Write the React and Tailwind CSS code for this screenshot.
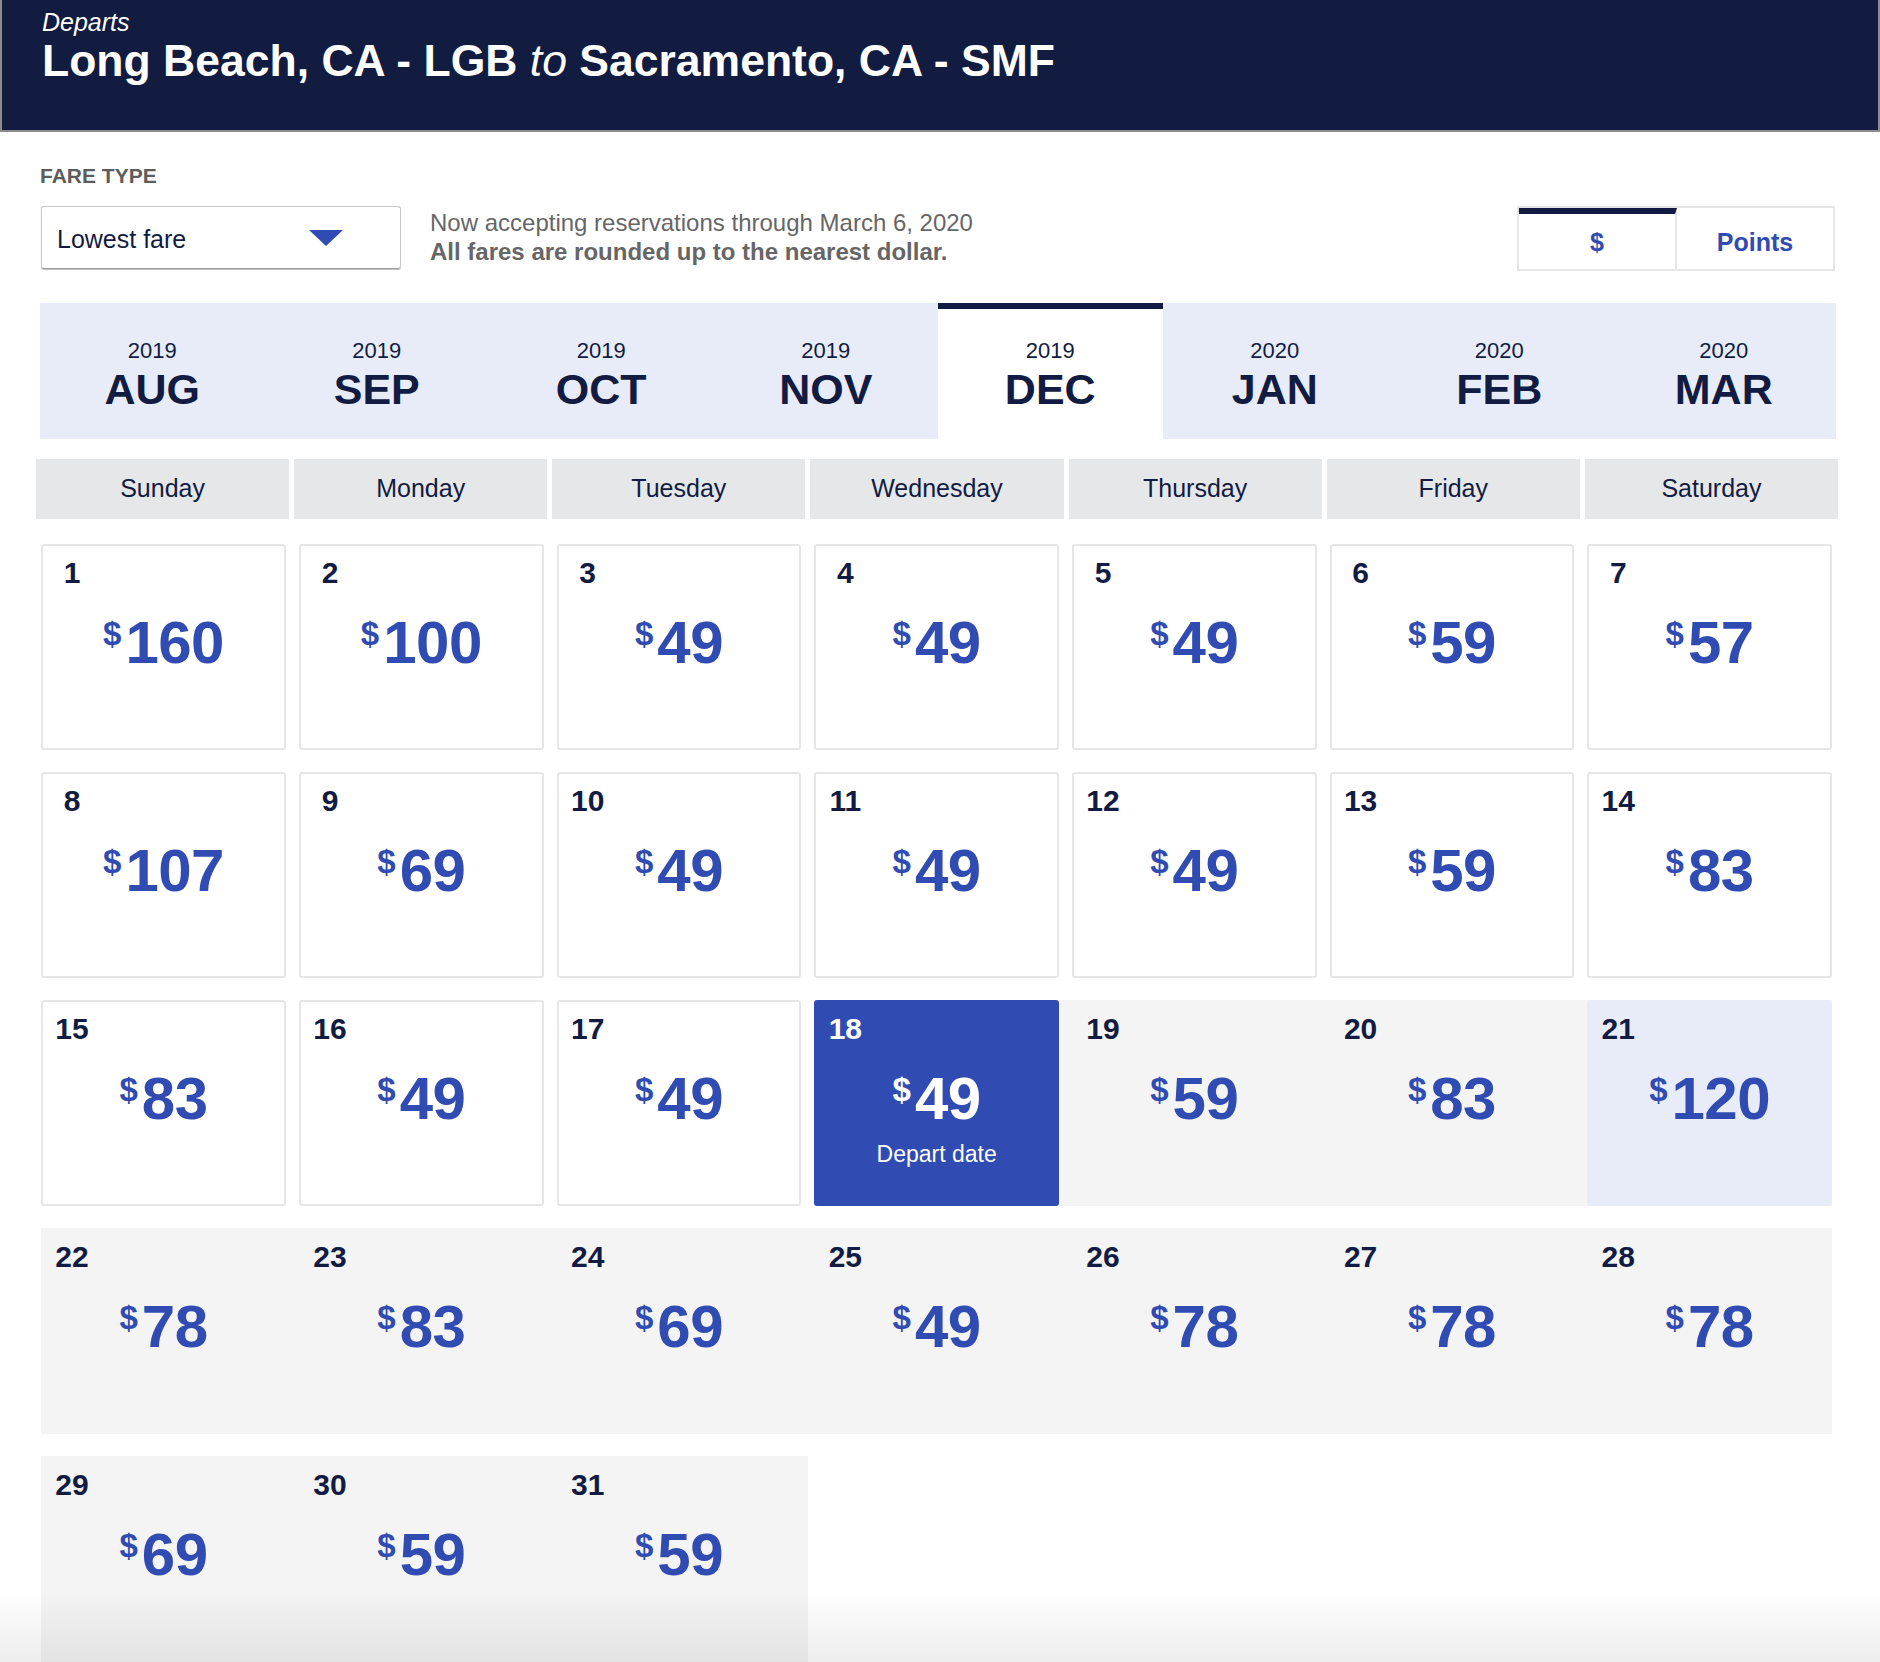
import React from 'react';

const MONTHS = [
  { y: '2019', m: 'AUG' },
  { y: '2019', m: 'SEP' },
  { y: '2019', m: 'OCT' },
  { y: '2019', m: 'NOV' },
  { y: '2019', m: 'DEC', active: true },
  { y: '2020', m: 'JAN' },
  { y: '2020', m: 'FEB' },
  { y: '2020', m: 'MAR' },
];

const WEEKDAYS = ['Sunday', 'Monday', 'Tuesday', 'Wednesday', 'Thursday', 'Friday', 'Saturday'];

// December 2019 fares, day 1 first
const PRICES = [
  160, 100, 49, 49, 49, 59, 57,
  107, 69, 49, 49, 49, 59, 83,
  83, 49, 49, 49, 59, 83, 120,
  78, 83, 69, 49, 78, 78, 78,
  69, 59, 59,
];

const DEPART = 18;
const RETURN = 21;

function Price({ value, light }) {
  return (
    <div className={`flex justify-center items-start mt-[25px] ${light ? 'text-white' : 'text-[#304cb2]'}`}>
      <span className="text-[33px] font-bold leading-none mt-[4px] mr-[4px]">$</span>
      <span className="text-[60px] font-bold leading-none tracking-[-0.5px]">{value}</span>
    </div>
  );
}

function DayCell({ day, price, col }) {
  const selected = day === DEPART;
  const inRange = day > DEPART;
  const isReturn = day === RETURN;

  let card;
  if (selected) card = 'border-[#304cb2] bg-[#304cb2]';
  else if (isReturn) card = 'border-[#e8ecf8] bg-[#e8ecf8]';
  else if (inRange) card = 'border-transparent';
  else card = 'border-[#e6e6e6] bg-white';

  return (
    <div className={`${col > 0 ? 'pl-[13px]' : ''} ${inRange ? 'bg-[#f4f4f4]' : ''} ${day === 31 ? 'mr-[-7px] pr-[7px]' : ''}`}>
      <div className={`h-[206px] border-2 rounded-[3px] pt-[12px] ${card}`}>
        <div className={`ml-[9px] w-[40px] text-center text-[30px] font-bold leading-none ${selected ? 'text-white' : 'text-[#121c42]'}`}>
          {day}
        </div>
        <Price value={price} light={selected} />
        {selected && (
          <div className="mt-[14px] text-center text-[23px] leading-none text-white">Depart date</div>
        )}
      </div>
    </div>
  );
}

export default function App() {
  const weeks = [];
  for (let i = 0; i < PRICES.length; i += 7) weeks.push(PRICES.slice(i, i + 7).map((p, j) => ({ day: i + j + 1, price: p })));

  return (
    <div className="relative w-[1880px] min-h-[1662px] bg-white font-['Liberation_Sans',Arial,sans-serif] overflow-hidden">
      {/* Header */}
      <div className="h-[132px] bg-[#121b40] border-x-2 border-b-2 border-[#8c8c8c] pl-[40px] pt-[10px] text-white">
        <div className="text-[25px] italic leading-none">Departs</div>
        <h1 className="mt-[4px] text-[44.5px] font-bold leading-none">
          Long Beach, CA - LGB <span className="italic font-normal">to</span> Sacramento, CA - SMF
        </h1>
      </div>

      <div className="ml-[40px] w-[1796px]">
        {/* Fare type row */}
        <div className="mt-[33px] text-[21px] font-bold leading-none text-[#5c5c5c]">FARE TYPE</div>
        <div className="mt-[20px] flex items-start">
          <div className="w-[360px] h-[63px] ml-[1px] border border-[#c8c8c8] border-b-[#9a9a9a] rounded-[3px] shadow-[0_1px_1px_rgba(0,0,0,0.25)] flex items-center pl-[15px] pr-[57px] pt-[4px] justify-between">
            <span className="text-[25px] text-[#121c42]">Lowest fare</span>
            <svg width="34" height="16" viewBox="0 0 34 16" className="-mt-[4px]">
              <polygon points="0,0 34,0 17,16" fill="#304cb2" />
            </svg>
          </div>
          <div className="ml-[29px] mt-[2px] text-[24px] leading-[29px] text-[#666]">
            <div>Now accepting reservations through March 6, 2020</div>
            <div className="font-bold">All fares are rounded up to the nearest dollar.</div>
          </div>
          <div className="ml-auto mr-[1px] w-[318px] h-[65px] border-2 border-[#e6e6e6] flex text-[25px] font-bold text-[#304cb2]">
            <div className="flex-1 border-t-[6px] border-t-[#121c42] border-r-2 border-r-[#e6e6e6] flex items-center justify-center pt-[2px]">$</div>
            <div className="flex-1 border-t-[6px] border-t-transparent flex items-center justify-center pt-[2px]">Points</div>
          </div>
        </div>

        {/* Months */}
        <div className="mt-[32px] h-[136px] bg-[#e8ecf8] grid grid-cols-8">
          {MONTHS.map(mo => (
            <div
              key={mo.m}
              className={`flex flex-col items-center pt-[31px] border-t-[6px] text-[#121c42] ${mo.active ? 'bg-white border-[#121c42]' : 'border-transparent'}`}
            >
              <div className="text-[22px] leading-none">{mo.y}</div>
              <div className="mt-[6px] text-[43px] font-bold leading-none">{mo.m}</div>
            </div>
          ))}
        </div>

        {/* Weekdays */}
        <div className="mt-[20px] -ml-[4px] w-[1802px] grid grid-cols-7 gap-[5px]">
          {WEEKDAYS.map(d => (
            <div key={d} className="h-[60px] bg-[#e6e7e9] flex items-center justify-center text-[25px] text-[#121c42]">{d}</div>
          ))}
        </div>

        {/* Calendar */}
        <div className="mt-[25px] ml-[1px] flex flex-col gap-[22px]">
          {weeks.map((w, wi) => (
            <div key={wi} className="grid grid-cols-[245px_repeat(6,257.67px)]">
              {w.map((c, ci) => (
                <DayCell key={c.day} day={c.day} price={c.price} col={ci} />
              ))}
            </div>
          ))}
        </div>
      </div>

      {/* bottom fade */}
      <div className="pointer-events-none absolute bottom-0 left-0 right-0 h-[72px] bg-linear-to-b from-transparent to-black/[0.07]" />
    </div>
  );
}
